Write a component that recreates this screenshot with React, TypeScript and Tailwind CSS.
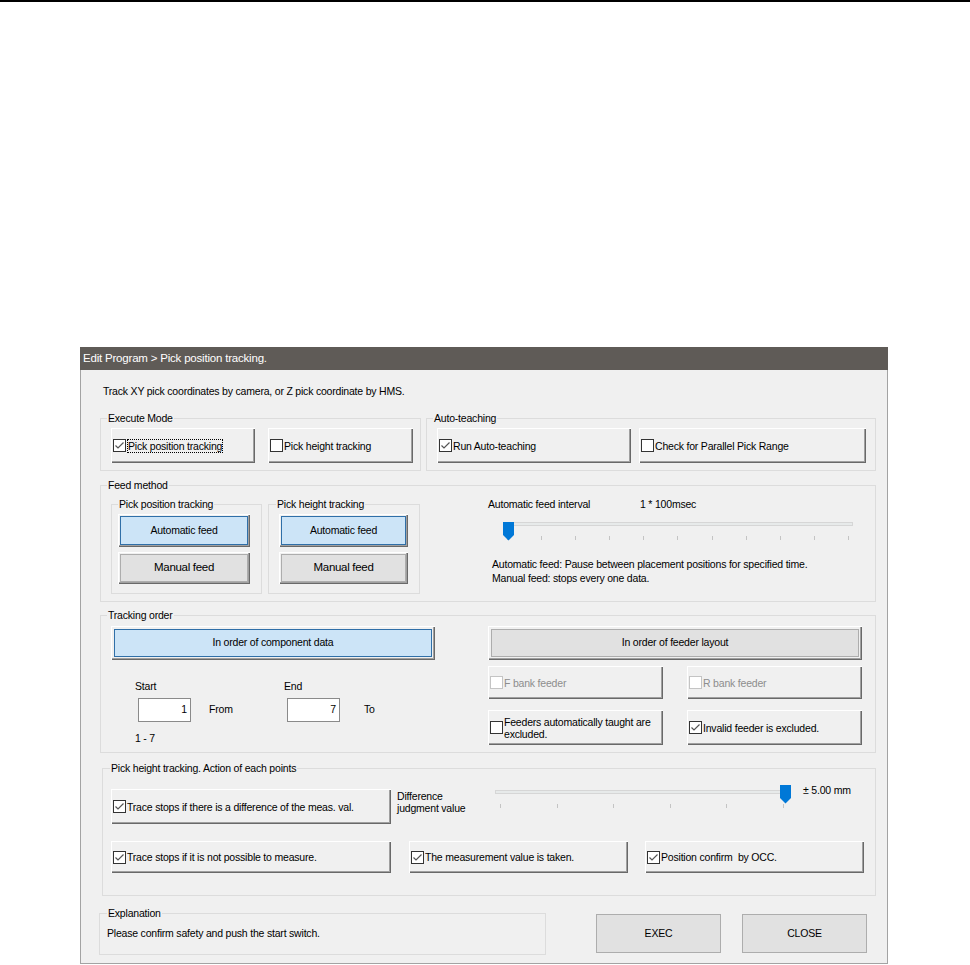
import type { ReactNode } from "react";

const raised =
  "bg-[#f0f0f0] shadow-[inset_1px_1px_0_#ffffff,inset_-1px_-1px_0_#696969,inset_-2px_-2px_0_#a0a0a0]";

function Box({ checked, disabled }: { checked?: boolean; disabled?: boolean }) {
  const c = disabled ? "#c4c4c4" : "#333333";
  return (
    <svg width="13" height="13" viewBox="0 0 13 13" className="shrink-0">
      <rect x="0.5" y="0.5" width="12" height="12" fill="#ffffff" stroke={c} />
      {checked && (
        <path d="M2.5 6.5 L5 9 L10.5 3.5" fill="none" stroke="#555555" strokeWidth="1.2" />
      )}
    </svg>
  );
}

function CheckButton({
  label,
  checked,
  disabled,
  focus,
  className,
}: {
  label: ReactNode;
  checked?: boolean;
  disabled?: boolean;
  focus?: boolean;
  className: string;
}) {
  return (
    <div className={`${raised} flex items-center pl-[2px] ${className}`}>
      <Box checked={checked} disabled={disabled} />
      <span
        className={`ml-[1px] leading-[12px] ${disabled ? "text-[#8d8d8d]" : "text-black"} ${
          focus ? "border border-dotted border-black" : ""
        }`}
      >
        {label}
      </span>
    </div>
  );
}

// raised frame with a flat coloured face inside it
function FaceButton({
  label,
  active,
  className,
  inset,
}: {
  label: string;
  active?: boolean;
  className: string;
  inset: string;
}) {
  return (
    <div className={`${raised} flex ${className}`}>
      <div
        className={`flex flex-1 items-center justify-center border ${inset} ${
          active ? "bg-[#cce4f7] border-[#2f6fa8]" : "bg-[#e1e1e1] border-[#adadad]"
        }`}
      >
        {label}
      </div>
    </div>
  );
}

function Group({
  label,
  className,
  labelLeft = "left-[6px]",
  children,
}: {
  label?: string;
  className: string;
  labelLeft?: string;
  children?: ReactNode;
}) {
  return (
    <div className={`relative border border-[#dcdcdc] ${className}`}>
      {label && (
        <span
          className={`absolute -top-[8px] ${labelLeft} bg-[#f0f0f0] px-[1px] leading-[14px] whitespace-nowrap`}
        >
          {label}
        </span>
      )}
      {children}
    </div>
  );
}

function Slider({
  className,
  thumb,
  ticks,
  tickPad,
}: {
  className: string;
  thumb: string;
  ticks: number;
  tickPad: string;
}) {
  return (
    <div className={`relative h-[23px] ${className}`}>
      <div className="mt-[5px] h-[4px] border border-[#d6d6d6] bg-[#e7eaea]" />
      <svg
        width="11"
        height="19"
        viewBox="0 0 11 19"
        className={`absolute top-0 ${thumb}`}
      >
        <path d="M0 0 H11 V13 L5.5 18.5 L0 13 Z" fill="#0078d7" />
      </svg>
      <div className={`mt-[10px] flex h-[4px] justify-between ${tickPad}`}>
        {Array.from({ length: ticks }).map((_, i) => (
          <div key={i} className="h-[4px] w-[1px] bg-[#c4c4c4]" />
        ))}
      </div>
    </div>
  );
}

function NumBox({ value }: { value: string }) {
  return (
    <div className="flex h-[24px] w-[53px] items-center justify-end border border-[#8a8a8a] bg-white pr-[3px]">
      {value}
    </div>
  );
}

export default function App() {
  return (
    <div className="min-h-[965px] bg-white font-['Liberation_Sans',Arial,sans-serif] text-[10.5px] tracking-[-0.2px] text-black">
      <div className="h-[2px] bg-black" />
      <div className="ml-[80px] mt-[345px] w-[808px]">
        <div className="flex h-[23px] items-center bg-[#5f5b57] pl-[3px] text-[11.5px] tracking-[-0.2px] text-white">
          Edit Program &gt; Pick position tracking.
        </div>

        <div className="border-x border-b border-[#a3a3a3] bg-[#f0f0f0] pb-[8px] pl-[19px] pt-[14px]">
          <div className="h-[14px] pl-[3px] leading-[14px]">
            Track XY pick coordinates by camera, or Z pick coordinate by HMS.
          </div>

          {/* execute mode / auto-teaching */}
          <div className="mt-[20px] flex">
            <Group label="Execute Mode" className="flex h-[53px] w-[321px] gap-[13px] pl-[10px] pt-[9px]">
              <CheckButton label="Pick position tracking" checked focus className="h-[35px] w-[144px]" />
              <CheckButton label="Pick height tracking" className="h-[35px] w-[145px]" />
            </Group>
            <Group
              label="Auto-teaching"
              className="ml-[5px] flex h-[53px] w-[450px] gap-[8px] pl-[10px] pt-[9px]"
            >
              <CheckButton label="Run Auto-teaching" checked className="h-[35px] w-[194px]" />
              <CheckButton label="Check for Parallel Pick Range" className="h-[35px] w-[227px]" />
            </Group>
          </div>

          {/* feed method */}
          <Group label="Feed method" className="mt-[14px] flex h-[117px] w-[776px] pl-[10px] pt-[12px]">
            <Group label="Pick position tracking" className="mt-[6px] h-[90px] w-[151px] pl-[6px] pt-[9px]">
              <FaceButton label="Automatic feed" active inset="m-[2px]" className="h-[33px] w-[132px]" />
              <FaceButton
                label="Manual feed"
                inset="m-[2px]"
                className="mt-[5px] h-[32px] w-[132px] text-[11.5px] tracking-[-0.3px]"
              />
            </Group>
            <Group
              label="Pick height tracking"
              labelLeft="left-[7px]"
              className="ml-[6px] mt-[6px] h-[90px] w-[152px] pl-[10px] pt-[9px]"
            >
              <FaceButton label="Automatic feed" active inset="m-[2px]" className="h-[33px] w-[129px]" />
              <FaceButton
                label="Manual feed"
                inset="m-[2px]"
                className="mt-[5px] h-[32px] w-[129px] text-[11.5px] tracking-[-0.3px]"
              />
            </Group>
            <div className="ml-[68px] w-[374px]">
              <div className="flex h-[13px] leading-[13px]">
                <span className="w-[152px]">Automatic feed interval</span>
                <span>1 * 100msec</span>
              </div>
              <Slider className="ml-[15px] mt-[11px] w-[350px]" thumb="left-0" ticks={11} tickPad="px-[4px]" />
              <div className="mt-[12px] pl-[4px] leading-[14px]">
                <div>Automatic feed: Pause between placement positions for specified time.</div>
                <div>Manual feed: stops every one data.</div>
              </div>
            </div>
          </Group>

          {/* tracking order */}
          <Group label="Tracking order" className="mt-[13px] flex h-[138px] w-[776px] pl-[10px] pt-[10px]">
            <div className="w-[324px]">
              <FaceButton label="In order of component data" active inset="m-[3px]" className="h-[34px] w-[324px]" />
              <div className="mt-[20px] flex h-[13px] pl-[24px] leading-[13px]">
                <span className="w-[149px]">Start</span>
                <span>End</span>
              </div>
              <div className="mt-[5px] flex items-center pl-[27px]">
                <NumBox value="1" />
                <span className="ml-[18px] w-[78px]">From</span>
                <NumBox value="7" />
                <span className="ml-[24px]">To</span>
              </div>
              <div className="mt-[10px] pl-[24px] leading-[13px]">1 - 7</div>
            </div>
            <div className="ml-[53px] w-[374px]">
              <FaceButton label="In order of feeder layout" inset="m-[3px]" className="h-[34px] w-[374px]" />
              <div className="mt-[6px] flex gap-[24px]">
                <CheckButton label="F bank feeder" disabled className="h-[33px] w-[175px]" />
                <CheckButton label="R bank feeder" disabled className="h-[33px] w-[175px]" />
              </div>
              <div className="mt-[11px] flex gap-[24px]">
                <CheckButton
                  label={
                    <>
                      Feeders automatically taught are
                      <br />
                      excluded.
                    </>
                  }
                  className="h-[35px] w-[175px] whitespace-nowrap"
                />
                <CheckButton label="Invalid feeder is excluded." checked className="h-[35px] w-[175px]" />
              </div>
            </div>
          </Group>

          {/* pick height tracking actions */}
          <Group
            label="Pick height tracking. Action of each points"
            labelLeft="left-[7px]"
            className="ml-[2px] mt-[15px] h-[128px] w-[774px] pl-[8px] pt-[20px]"
          >
            <div className="flex items-start">
              <CheckButton
                label="Trace stops if there is a difference of the meas. val."
                checked
                className="h-[35px] w-[280px]"
              />
              <div className="ml-[6px] mt-[1px] w-[98px] leading-[12px]">
                <div>Difference</div>
                <div>judgment value</div>
              </div>
              <Slider
                className="-mt-[4px] w-[295px]"
                thumb="left-[285px]"
                ticks={6}
                tickPad="pl-[5px] pr-[6px]"
              />
              <span className="-mt-[5px] ml-[13px] leading-[13px]">± 5.00 mm</span>
            </div>
            <div className="mt-[17px] flex">
              <CheckButton
                label="Trace stops if it is not possible to measure."
                checked
                className="h-[32px] w-[280px]"
              />
              <CheckButton
                label="The measurement value is taken."
                checked
                className="ml-[18px] h-[32px] w-[219px]"
              />
              <CheckButton
                label="Position confirm  by OCC."
                checked
                className="ml-[17px] h-[32px] w-[219px] whitespace-pre"
              />
            </div>
          </Group>

          {/* explanation + actions */}
          <div className="mt-[17px] flex items-start">
            <Group
              label="Explanation"
              labelLeft="left-[7px]"
              className="-ml-[1px] h-[42px] w-[447px] pl-[7px] pt-[12px]"
            >
              <div className="leading-[14px]">Please confirm safety and push the start switch.</div>
            </Group>
            <div className="ml-[50px] mt-[1px] flex h-[39px] w-[125px] items-center justify-center border border-[#adadad] bg-[#e1e1e1]">
              EXEC
            </div>
            <div className="ml-[21px] mt-[1px] flex h-[39px] w-[125px] items-center justify-center border border-[#adadad] bg-[#e1e1e1]">
              CLOSE
            </div>
          </div>
        </div>
      </div>
    </div>
  );
}
